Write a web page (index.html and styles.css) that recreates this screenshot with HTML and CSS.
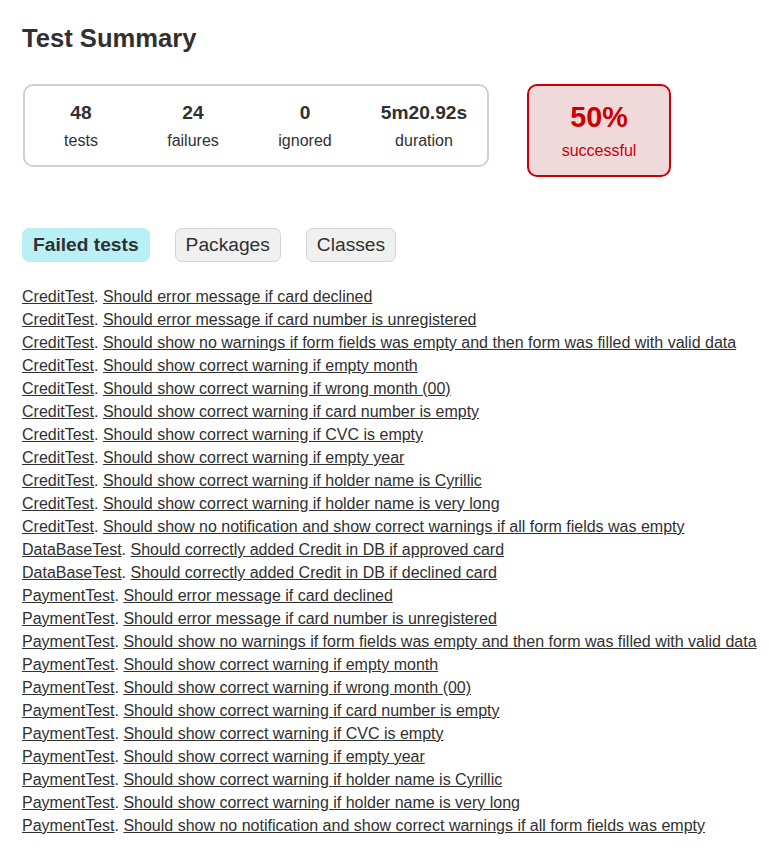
FILE: index.html
```html
<!DOCTYPE html>
<html>
<head>
<meta charset="utf-8">
<title>Test results - Test Summary</title>
<link rel="stylesheet" href="styles.css">
</head>
<body>
<div class="content">
  <h1>Test Summary</h1>
  <div class="summary">
    <div class="counts">
      <div class="info"><div class="counter">48</div><div class="label">tests</div></div>
      <div class="info"><div class="counter">24</div><div class="label">failures</div></div>
      <div class="info"><div class="counter">0</div><div class="label">ignored</div></div>
      <div class="info dur"><div class="counter">5m20.92s</div><div class="label">duration</div></div>
    </div>
    <div class="rate">
      <div class="percent">50%</div>
      <div class="label">successful</div>
    </div>
  </div>
  <ul class="tabs">
    <li class="tab selected">Failed tests</li>
    <li class="tab">Packages</li>
    <li class="tab">Classes</li>
  </ul>
  <ul class="links">
    <li><a href="#">CreditTest</a>. <a href="#">Should error message if card declined</a></li>
    <li><a href="#">CreditTest</a>. <a href="#">Should error message if card number is unregistered</a></li>
    <li><a href="#">CreditTest</a>. <a href="#">Should show no warnings if form fields was empty and then form was filled with valid data</a></li>
    <li><a href="#">CreditTest</a>. <a href="#">Should show correct warning if empty month</a></li>
    <li><a href="#">CreditTest</a>. <a href="#">Should show correct warning if wrong month (00)</a></li>
    <li><a href="#">CreditTest</a>. <a href="#">Should show correct warning if card number is empty</a></li>
    <li><a href="#">CreditTest</a>. <a href="#">Should show correct warning if CVC is empty</a></li>
    <li><a href="#">CreditTest</a>. <a href="#">Should show correct warning if empty year</a></li>
    <li><a href="#">CreditTest</a>. <a href="#">Should show correct warning if holder name is Cyrillic</a></li>
    <li><a href="#">CreditTest</a>. <a href="#">Should show correct warning if holder name is very long</a></li>
    <li><a href="#">CreditTest</a>. <a href="#">Should show no notification and show correct warnings if all form fields was empty</a></li>
    <li><a href="#">DataBaseTest</a>. <a href="#">Should correctly added Credit in DB if approved card</a></li>
    <li><a href="#">DataBaseTest</a>. <a href="#">Should correctly added Credit in DB if declined card</a></li>
    <li><a href="#">PaymentTest</a>. <a href="#">Should error message if card declined</a></li>
    <li><a href="#">PaymentTest</a>. <a href="#">Should error message if card number is unregistered</a></li>
    <li><a href="#">PaymentTest</a>. <a href="#">Should show no warnings if form fields was empty and then form was filled with valid data</a></li>
    <li><a href="#">PaymentTest</a>. <a href="#">Should show correct warning if empty month</a></li>
    <li><a href="#">PaymentTest</a>. <a href="#">Should show correct warning if wrong month (00)</a></li>
    <li><a href="#">PaymentTest</a>. <a href="#">Should show correct warning if card number is empty</a></li>
    <li><a href="#">PaymentTest</a>. <a href="#">Should show correct warning if CVC is empty</a></li>
    <li><a href="#">PaymentTest</a>. <a href="#">Should show correct warning if empty year</a></li>
    <li><a href="#">PaymentTest</a>. <a href="#">Should show correct warning if holder name is Cyrillic</a></li>
    <li><a href="#">PaymentTest</a>. <a href="#">Should show correct warning if holder name is very long</a></li>
    <li><a href="#">PaymentTest</a>. <a href="#">Should show no notification and show correct warnings if all form fields was empty</a></li>
  </ul>
</div>
</body>
</html>
```
FILE: styles.css
```css
body {
  margin: 0;
  padding: 0;
  font-family: "Liberation Sans", Arial, sans-serif;
  font-size: 16px;
  color: #303030;
}
a, a:visited {
  color: #303030;
}
.content {
  padding: 24px 22px 0 22px;
}
h1 {
  margin: 0;
  font-size: 25.6px;
  line-height: 29px;
  font-weight: bold;
}
.summary {
  display: flex;
  align-items: flex-start;
  margin-top: 31px;
}
.counts {
  display: flex;
  margin-left: 1px;
  border: 2px solid #d0d0d0;
  border-radius: 10px;
}
.info {
  width: 112px;
  padding: 15px 0;
  text-align: center;
}
.info.dur {
  width: 126px;
}
.counter {
  font-size: 19.2px;
  font-weight: bold;
  line-height: 23px;
  margin-bottom: 8px;
}
.label {
  line-height: 18px;
}
.rate {
  width: 140px;
  margin-left: 38px;
  padding: 15px 0;
  text-align: center;
  border: 2px solid #cc0000;
  border-radius: 10px;
  background-color: #f0d9db;
  color: #cc0000;
}
.rate .label {
  line-height: 19px;
}
.percent {
  font-size: 28.8px;
  font-weight: bold;
  line-height: 32px;
  margin-bottom: 8px;
}
.tabs {
  display: flex;
  gap: 25px;
  list-style: none;
  margin: 51px 0 0 0;
  padding: 0;
}
.tab {
  padding: 5px 10px;
  border: 1px solid #d4d4d4;
  border-radius: 7px;
  background-color: #f0f0f0;
  font-size: 19.2px;
  line-height: 22px;
}
.tab.selected {
  background-color: #b9f0f5;
  border-color: #b9f0f5;
  font-weight: bold;
}
.links {
  list-style: none;
  margin: 26px 0 0 0;
  padding: 0;
}
.links li {
  line-height: 18px;
  margin-bottom: 5px;
  white-space: nowrap;
}
```
